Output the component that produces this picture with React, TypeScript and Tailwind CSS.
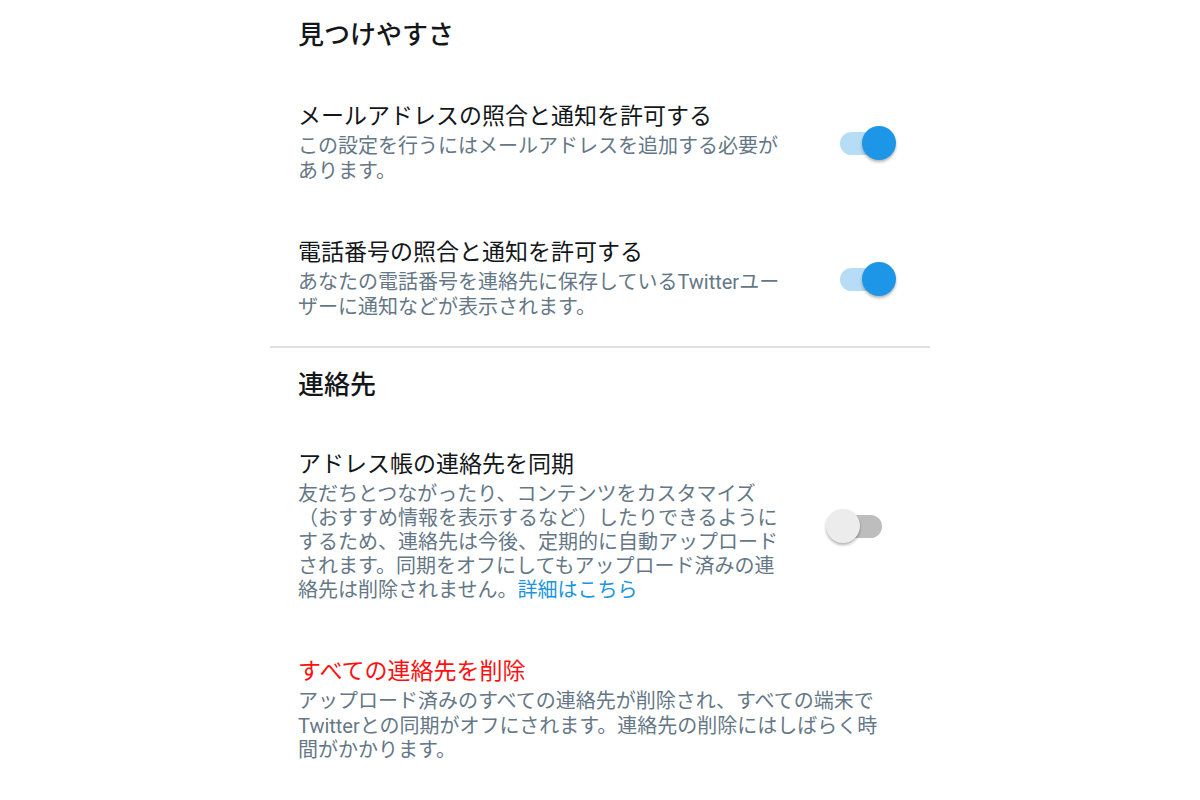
import React from "react";

const FONT = "font-['Roboto','Noto_Sans_CJK_JP',sans-serif]";

function Toggle({ on }: { on: boolean }) {
  if (on) {
    return (
      <div className="relative w-[56px] h-[34px] mr-[34px] shrink-0">
        <div className="absolute left-0 top-[5.5px] w-[52px] h-[23px] rounded-full bg-[#b6dcf6]" />
        <div className="absolute right-0 top-0 w-[34px] h-[34px] rounded-full bg-[#1d96e8] shadow-[0_2px_3px_rgba(0,0,0,0.3)]" />
      </div>
    );
  }
  return (
    <div className="relative w-[56px] h-[34px] mr-[48px] shrink-0">
      <div className="absolute right-0 top-[5.5px] w-[52px] h-[23px] rounded-full bg-[#bdbdbd]" />
      <div className="absolute left-0 top-0 w-[34px] h-[34px] rounded-full bg-[#ececec] shadow-[0_2px_3px_rgba(0,0,0,0.3)]" />
    </div>
  );
}

function SettingRow({
  title,
  lines,
  on,
  className,
  titleClass = "text-[#14171a]",
  lh = "leading-[25px]",
  extra,
}: {
  title: string;
  lines: string[];
  on?: boolean;
  className?: string;
  titleClass?: string;
  lh?: string;
  extra?: React.ReactNode;
}) {
  return (
    <div className={`flex items-center ${className ?? ""}`}>
      <div className="flex-1 min-w-0">
        <div className={`text-[23px] leading-[30px] whitespace-nowrap ${titleClass}`}>{title}</div>
        <div className={`mt-[2px] text-[20px] ${lh} text-[#657786] whitespace-nowrap`}>
          {lines.map((l, i) => (
            <div key={i}>
              {l}
              {i === lines.length - 1 && extra}
            </div>
          ))}
        </div>
      </div>
      {on !== undefined && <Toggle on={on} />}
    </div>
  );
}

export default function App() {
  return (
    <div className={`w-[1200px] h-[800px] bg-white overflow-hidden ${FONT}`}>
      <div className="w-[660px] mx-auto">
        {/* Discoverability */}
        <div className="pl-[28px] pt-[18px]">
          <h2 className="text-[26px] leading-[34px] font-medium text-[#14171a]">見つけやすさ</h2>
          <SettingRow
            className="mt-[50px]"
            title="メールアドレスの照合と通知を許可する"
            lines={["この設定を行うにはメールアドレスを追加する必要が", "あります。"]}
            on
          />
          <SettingRow
            className="mt-[54px]"
            title="電話番号の照合と通知を許可する"
            lines={["あなたの電話番号を連絡先に保存しているTwitterユー", "ザーに通知などが表示されます。"]}
            on
          />
        </div>

        <div className="mt-[26px] h-[2px] bg-[#e0e0e0]" />

        {/* Contacts */}
        <div className="pl-[28px] pt-[20px]">
          <h2 className="text-[26px] leading-[34px] font-medium text-[#14171a]">連絡先</h2>
          <SettingRow
            className="mt-[48px]"
            title="アドレス帳の連絡先を同期"
            lh="leading-[24px]"
            lines={[
              "友だちとつながったり、コンテンツをカスタマイズ",
              "（おすすめ情報を表示するなど）したりできるように",
              "するため、連絡先は今後、定期的に自動アップロード",
              "されます。同期をオフにしてもアップロード済みの連",
              "絡先は削除されません。",
            ]}
            extra={<span className="text-[#1b95e0]">詳細はこちら</span>}
            on={false}
          />
          <SettingRow
            className="mt-[55px]"
            title="すべての連絡先を削除"
            titleClass="text-[#ff1010]"
            lh="leading-[24.5px]"
            lines={[
              "アップロード済みのすべての連絡先が削除され、すべての端末で",
              "Twitterとの同期がオフにされます。連絡先の削除にはしばらく時",
              "間がかかります。",
            ]}
          />
        </div>
      </div>
    </div>
  );
}
